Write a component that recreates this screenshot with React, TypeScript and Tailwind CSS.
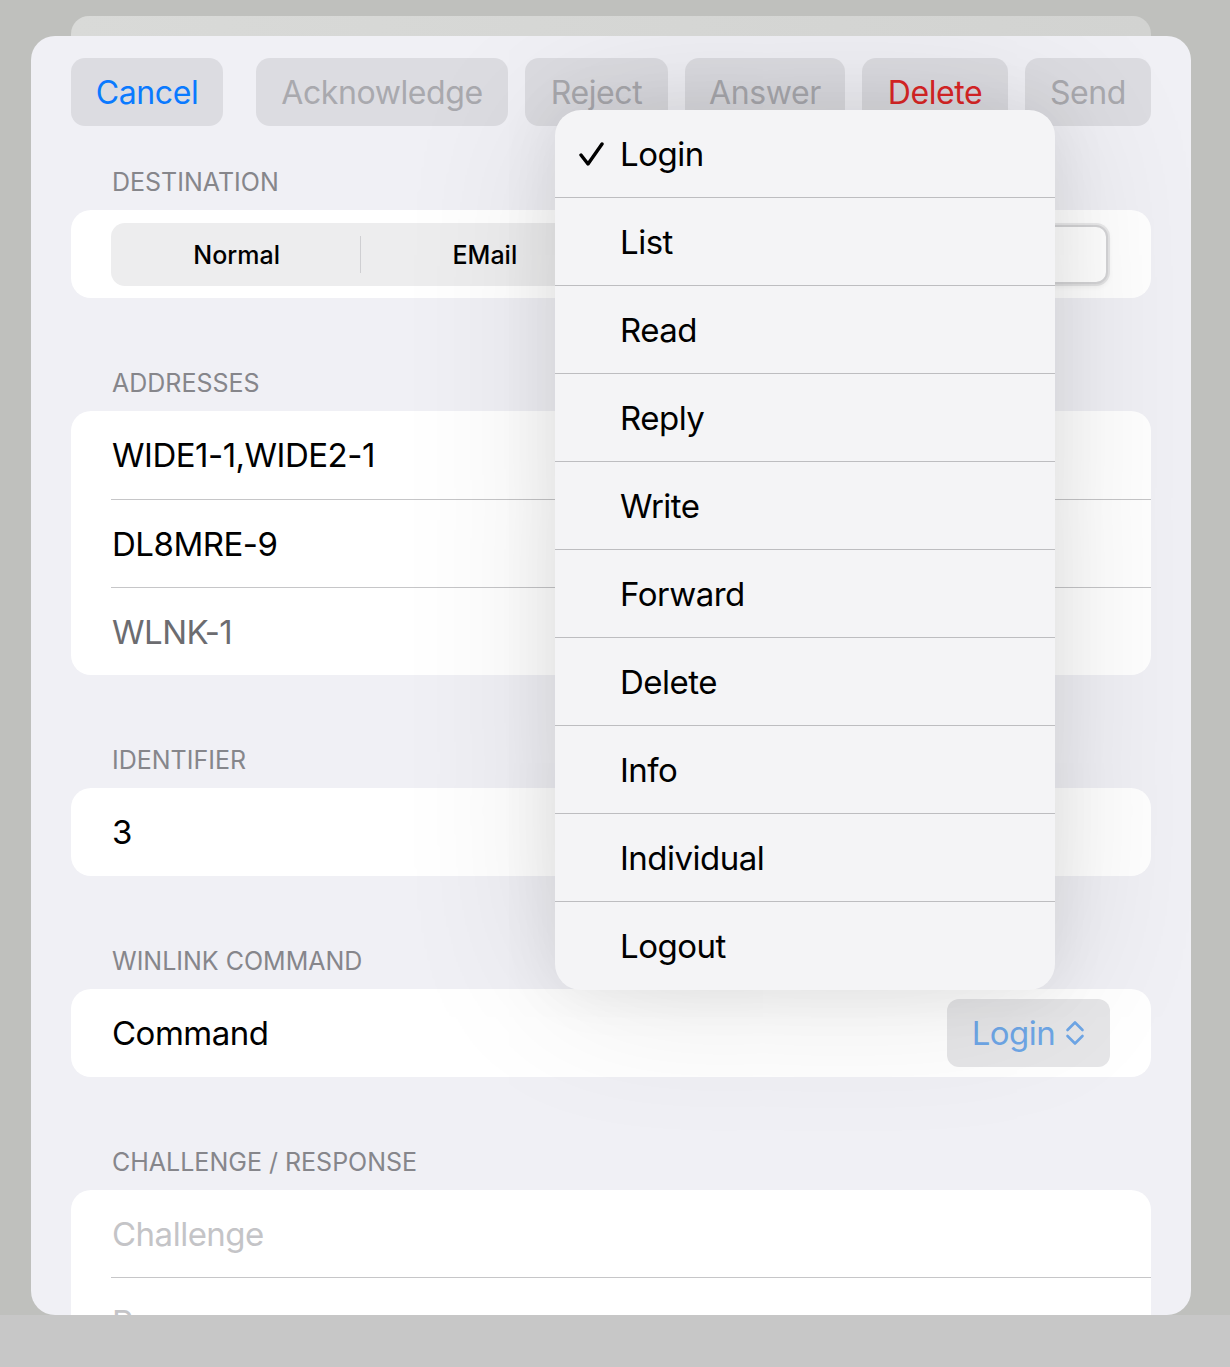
import React from "react";

const items = ["Login", "List", "Read", "Reply", "Write", "Forward", "Delete", "Info", "Individual", "Logout"];

function Label({ text, first }: { text: string; first?: boolean }) {
  return (
    <div
      className={`${first ? "mt-[42px]" : "mt-[71px]"} mb-[14px] h-[28px] leading-[28px] pl-[41px] text-[25px] text-[#86868b] tracking-[0px]`}
    >
      {text}
    </div>
  );
}

function Btn({ text, color, w }: { text: string; color: string; w: string }) {
  return (
    <div className={`h-[68px] ${w} pt-[2px] rounded-[14px] bg-[#dcdce1] flex items-center justify-center text-[32px] tracking-[-0.4px] ${color}`}>
      {text}
    </div>
  );
}

export default function App() {
  return (
    <div className="w-[1230px] h-[1367px] flex flex-col font-['Inter',sans-serif] overflow-hidden">
      <div className="h-[1315px] bg-[#bfc0bd] flex flex-col">
        <div className="ml-[71px] mt-[16px] h-[20px] w-[1080px] shrink-0 rounded-t-[18px] bg-gradient-to-r from-[#d9dad8] to-[#d2d3d1]" />
        <div className="relative ml-[31px] w-[1160px] flex-1 rounded-[24px] bg-[#f0f0f5] overflow-hidden px-[40px] pt-[22px]">
          {/* Buttons */}
          <div className="flex justify-between">
            <Btn text="Cancel" color="text-[#0a7aff]" w="w-[152px]" />
            <div className="flex gap-[17px]">
              <Btn text="Acknowledge" color="text-[#a9a9ae]" w="w-[252px]" />
              <Btn text="Reject" color="text-[#a9a9ae]" w="w-[143px]" />
              <Btn text="Answer" color="text-[#a9a9ae]" w="w-[160px]" />
              <Btn text="Delete" color="text-[#dc2626]" w="w-[146px]" />
              <Btn text="Send" color="text-[#a9a9ae]" w="w-[126px]" />
            </div>
          </div>

          <Label text="DESTINATION" first />
          <div className="h-[88px] rounded-[20px] bg-white pl-[40px] pr-[41px] flex items-center">
            <div className="flex-1 h-[63px] rounded-[14px] bg-[#ededee] p-[2px] flex items-stretch text-[25px] font-medium text-black">
              <div className="flex-1 flex items-center justify-center pt-[3px]">Normal</div>
              <div className="w-px my-[11px] bg-[#cfcfd2]" />
              <div className="flex-1 flex items-center justify-center pt-[3px]">EMail</div>
              <div className="w-px my-[11px] bg-[#cfcfd2]" />
              <div className="flex-1 flex items-center justify-center pt-[3px]">SMS</div>
              <div className="flex-1 flex items-center justify-center pt-[3px] rounded-[12px] bg-white border-[2px] border-[#d4d4d6] shadow-[0_2px_6px_rgba(0,0,0,0.08)]">
                Winlink
              </div>
            </div>
          </div>

          <Label text="ADDRESSES" />
          <div className="rounded-[20px] bg-white flex flex-col text-[33px] tracking-[-0.5px]">
            <div className="h-[88px] pt-[2px] flex items-center pl-[41px] text-black">WIDE1-1,WIDE2-1</div>
            <div className="ml-[40px] h-px bg-[#c6c6c8]" />
            <div className="h-[87px] pt-[2px] flex items-center pl-[41px] text-black">DL8MRE-9</div>
            <div className="ml-[40px] h-px bg-[#c6c6c8]" />
            <div className="h-[87px] pt-[2px] flex items-center pl-[41px] text-[#6c6c70]">WLNK-1</div>
          </div>

          <Label text="IDENTIFIER" />
          <div className="h-[88px] pt-[2px] rounded-[20px] bg-white flex items-center pl-[41px] text-[33px] text-black">3</div>

          <Label text="WINLINK COMMAND" />
          <div className="h-[88px] rounded-[20px] bg-white flex items-center justify-between pl-[41px] pr-[41px] text-[33px] tracking-[-0.5px] text-black">
            <span className="pt-[2px]">Command</span>
            <div className="h-[68px] w-[163px] rounded-[12px] bg-[#e6e6e8] flex items-center justify-center gap-[10px] text-[#6ea6e6]">
              <span className="pt-[2px]">Login</span>
              <svg width="20" height="26" viewBox="0 0 20 26" fill="none" stroke="#6ea6e6" strokeWidth="2.6" strokeLinecap="round" strokeLinejoin="round">
                <path d="M2.5 10 L10 2.5 L17.5 10" />
                <path d="M2.5 16 L10 23.5 L17.5 16" />
              </svg>
            </div>
          </div>

          <Label text="CHALLENGE / RESPONSE" />
          <div className="rounded-[20px] bg-white flex flex-col text-[33px] tracking-[-0.5px] text-[#c4c4c7]">
            <div className="h-[87px] pt-[2px] flex items-center pl-[41px]">Challenge</div>
            <div className="ml-[40px] h-px bg-[#c6c6c8]" />
            <div className="h-[88px] pt-[2px] flex items-center pl-[41px]">Response</div>
          </div>

          {/* Menu */}
          <div className="absolute left-[524px] top-[74px] w-[500px] rounded-[26px] bg-[#f4f4f6] shadow-[0_0_160px_rgba(0,0,0,0.12),0_0_60px_rgba(0,0,0,0.07)] flex flex-col overflow-hidden">
            {items.map((it, i) => (
              <div
                key={it}
                className={`h-[88px] pt-[2px] flex items-center relative text-[33px] tracking-[-0.5px] text-black pl-[65px] ${i < items.length - 1 ? "border-b border-[#bdbdc0]" : ""}`}
              >
                {i === 0 && (
                  <svg className="absolute left-[24px] top-[32px]" width="26" height="25" viewBox="0 0 26 25" fill="none" stroke="#000" strokeWidth="3.4" strokeLinecap="round" strokeLinejoin="round">
                    <path d="M2 13 L9 22 L23 2" />
                  </svg>
                )}
                {it}
              </div>
            ))}
          </div>
        </div>
      </div>
      <div className="h-[52px] bg-[#c7c7c7]" />
    </div>
  );
}
